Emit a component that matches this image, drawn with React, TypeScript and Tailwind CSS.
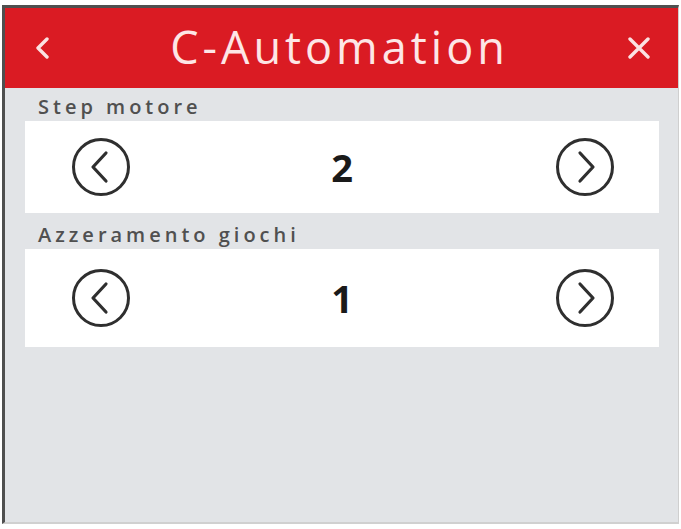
import React from "react";

function CircleArrow({ dir }: { dir: "left" | "right" }) {
  return (
    <svg width="60" height="60" viewBox="0 0 60 60" className="shrink-0">
      <circle cx="30" cy="30" r="27.5" fill="none" stroke="#2f2f2f" strokeWidth="3" />
      {dir === "left" ? (
        <path d="M35 16 L22 30 L35 44" fill="none" stroke="#2f2f2f" strokeWidth="3.2" strokeLinecap="round" strokeLinejoin="round" />
      ) : (
        <path d="M25 16 L38 30 L25 44" fill="none" stroke="#2f2f2f" strokeWidth="3.2" strokeLinecap="round" strokeLinejoin="round" />
      )}
    </svg>
  );
}

function Stepper({ label, value, mt, h }: { label: string; value: string; mt: string; h: string }) {
  return (
    <div className={mt}>
      <div className="pl-[13px] text-[20px] leading-[22px] tracking-[4px] text-[#505050] font-semibold" style={{ fontFamily: '"Open Sans", sans-serif' }}>
        {label}
      </div>
      <div className={`mt-[3px] ${h} bg-white flex items-center justify-between pl-[46px] pr-[44px]`}>
        <CircleArrow dir="left" />
        <div className="text-[38px] font-bold text-[#1a1a1a] leading-none tracking-[2px]" style={{ fontFamily: '"Open Sans", sans-serif' }}>
          {value}
        </div>
        <CircleArrow dir="right" />
      </div>
    </div>
  );
}

export default function App() {
  return (
    <div className="w-[681px] h-[529px] bg-white pt-[5px] pl-[2px] pr-[2px] pb-[5px]">
      <div className="h-full flex flex-col border-l-[3px] border-t-[3px] border-[#4f4f4f] border-r border-r-[#cfcfcf] border-b-2 border-b-[#d0d0d0]">
        <div className="h-[80px] bg-[#da1b23] flex items-center justify-between pl-[30px] pr-[28px] shrink-0">
          <svg width="16" height="22" viewBox="0 0 16 22">
            <path d="M12 2 L3 11 L12 20" fill="none" stroke="#fbe2e2" strokeWidth="3.4" strokeLinecap="round" strokeLinejoin="round" />
          </svg>
          <div className="text-[45px] leading-none tracking-[4px] text-[#fde6e6] -mt-[4px]" style={{ fontFamily: '"Open Sans", sans-serif' }}>
            C-Automation
          </div>
          <svg width="22" height="22" viewBox="0 0 22 22">
            <path d="M2 2 L20 20 M20 2 L2 20" fill="none" stroke="#fbe2e2" strokeWidth="3.4" strokeLinecap="round" />
          </svg>
        </div>
        <div className="flex-1 bg-[#e2e4e7] pl-[20px] pr-[19px]">
          <Stepper label="Step motore" value="2" mt="mt-[8px]" h="h-[92px]" />
          <Stepper label="Azzeramento giochi" value="1" mt="mt-[11px]" h="h-[98px]" />
        </div>
      </div>
    </div>
  );
}
